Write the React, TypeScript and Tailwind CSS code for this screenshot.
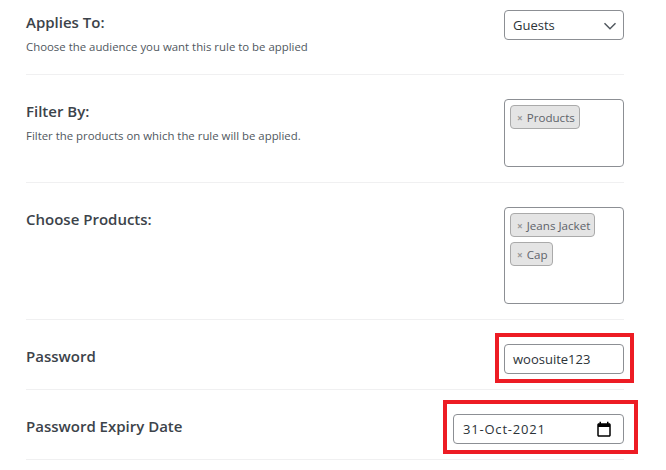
import React from "react";

function Tag({ label }: { label: string }) {
  return (
    <span className="flex h-[24px] w-fit items-center rounded-[4px] border border-[#aaaaaa] bg-[#e4e4e4] pl-[6px] pr-[4px] pt-[1px] text-[11.6px] text-[#5e636a]">
      <span className="mr-[4px] text-[10px] font-bold leading-none text-[#999999]">×</span>
      {label}
    </span>
  );
}

function Row({ title, desc, top, bottom, children }: { title: string; desc?: string; top: string; bottom: string; children: React.ReactNode }) {
  return (
    <div className={`flex items-start justify-between border-b border-[#f0f0f1] ${top} ${bottom}`}>
      <div>
        <div className="text-[15px] font-[550] leading-[24px] text-[#3c434a]">{title}</div>
        {desc && <div className="mt-[4px] text-[11.4px] leading-[18px] text-[#50575e]">{desc}</div>}
      </div>
      {children}
    </div>
  );
}

const box = "rounded-[4px] border border-[#8c8f94] bg-white";

export default function App() {
  return (
    <div className="h-[470px] w-[666px] overflow-hidden bg-white pl-[26px] pr-[42px] font-['Open_Sans',sans-serif]">
      <Row title="Applies To:" desc="Choose the audience you want this rule to be applied" top="pt-[10px]" bottom="pb-[18px]">
        <div className={`${box} flex h-[30px] w-[120px] items-center justify-between pl-[8px] pr-[2px] pt-[1px] text-[13px] text-[#2c3338]`}>
          Guests
          <svg width="22" height="22" viewBox="0 0 20 20" fill="none" stroke="#50575e" strokeWidth="1.3"><path d="M5 7.5l5 5 5-5" /></svg>
        </div>
      </Row>
      <Row title="Filter By:" desc="Filter the products on which the rule will be applied." top="pt-[24px]" bottom="pb-[15px]">
        <div className={`${box} flex h-[68px] w-[120px] flex-col gap-[5px] p-[5px]`}>
          <Tag label="Products" />
        </div>
      </Row>
      <Row title="Choose Products:" top="pt-[24px]" bottom="pb-[15px]">
        <div className={`${box} flex h-[97px] w-[120px] flex-col gap-[5px] p-[5px]`}>
          <Tag label="Jeans Jacket" />
          <Tag label="Cap" />
        </div>
      </Row>
      <Row title="Password" top="pt-[24px]" bottom="pb-[15px]">
        <div className="relative">
          <div className={`${box} flex h-[30px] w-[120px] items-center pl-[8px] pt-[1px] text-[13px] text-[#2c3338]`}>woosuite123</div>
          <div className="absolute -bottom-[9px] -left-[9px] -right-[10px] -top-[11px] border-[4px] border-[#ed1c24]" />
        </div>
      </Row>
      <Row title="Password Expiry Date" top="pt-[24px]" bottom="pb-[15px]">
        <div className="relative">
          <div className={`${box} flex h-[30px] w-[171px] items-center justify-between pl-[9px] pr-[10px] pt-[1px] text-[13px] text-[#2c3338]`}>
            <span className="tracking-[0.8px]">31-Oct-2021</span>
            <svg width="18" height="18" viewBox="0 0 24 24" fill="#000"><path d="M19 3h-1V1h-2v2H8V1H6v2H5c-1.1 0-2 .9-2 2v14c0 1.1.9 2 2 2h14c1.1 0 2-.9 2-2V5c0-1.1-.9-2-2-2zm0 16H5V8h14v11z" /></svg>
          </div>
          <div className="absolute -bottom-[10px] -left-[10px] -right-[14px] -top-[14px] border-[4px] border-[#ed1c24]" />
        </div>
      </Row>
    </div>
  );
}
